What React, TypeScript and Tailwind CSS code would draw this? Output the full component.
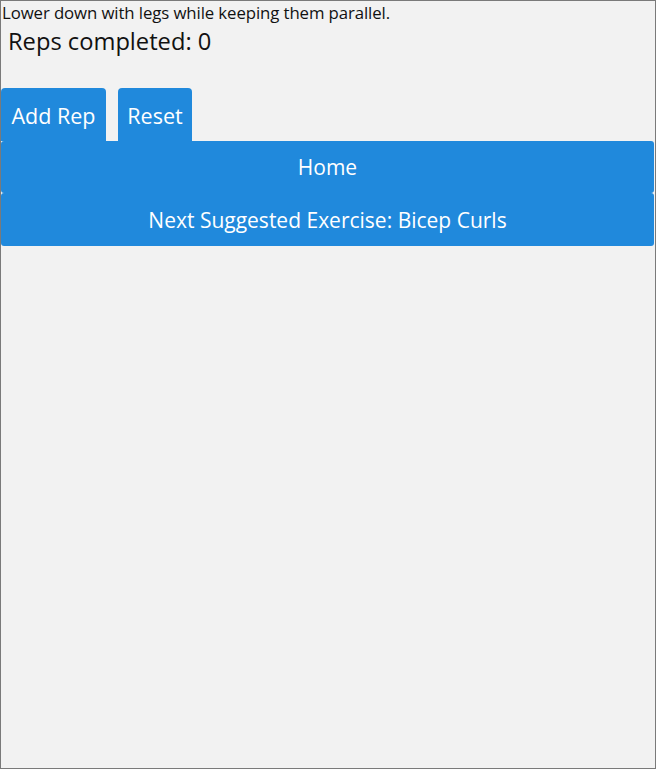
import { useState } from 'react';

function App() {
  const [reps, setReps] = useState(0);

  return (
    <div className="w-[656px] h-[769px] border border-[#7a7a7a] bg-[#f2f2f2] font-['Open_Sans',sans-serif] text-[#111]">
      <p className="pl-px pt-[2px] text-[16.8px] leading-[20px] tracking-[-0.1px]">
        Lower down with legs while keeping them parallel.
      </p>
      <p className="pl-[7px] pt-[3px] text-[23.7px] leading-[30px]">Reps completed: {reps}</p>

      <div className="flex gap-3 mt-[32px]">
        <button
          onClick={() => setReps(reps + 1)}
          className="w-[105px] h-[53px] pt-[3px] rounded-t-[4px] bg-[#2089dc] text-white text-[21.5px]"
        >
          Add Rep
        </button>
        <button
          onClick={() => setReps(0)}
          className="w-[74px] h-[53px] pt-[3px] rounded-t-[4px] bg-[#2089dc] text-white text-[21.5px]"
        >
          Reset
        </button>
      </div>

      <button className="block w-[653px] h-[52px] pt-[2px] rounded-[3px] bg-[#2089dc] text-white text-[21px]">
        Home
      </button>
      <button className="block w-[653px] h-[53px] pt-[2px] rounded-[3px] bg-[#2089dc] text-white text-[21px]">
        Next Suggested Exercise: Bicep Curls
      </button>
    </div>
  );
}

export default App;
